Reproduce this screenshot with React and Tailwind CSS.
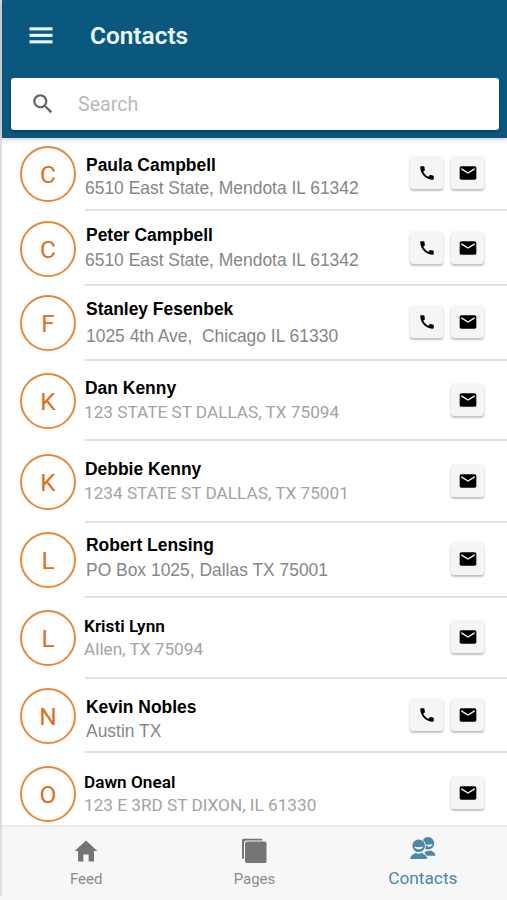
import { useState } from 'react'
import { MdCall, MdMail, MdSearch } from 'react-icons/md'
import { IoMdHome } from 'react-icons/io'

const arial = 'font-["Liberation_Sans",sans-serif]'
const roboto = 'font-[Roboto,sans-serif]'

const contacts = [
  { initial: 'C', name: 'Paula Campbell', address: '6510 East State, Mendota IL 61342', phone: true, row: 'h-[73px]', avatar: 'mt-2', text: 'pt-[17px] pl-[9px] gap-[3px]', addrCls: '-ml-px' },
  { initial: 'C', name: 'Peter Campbell', address: '6510 East State, Mendota IL 61342', phone: true, row: 'h-[75px]', avatar: 'mt-[10px]', text: 'pt-[14px] pl-[9px] gap-[5px]', addrCls: '-ml-px' },
  { initial: 'F', name: 'Stanley Fesenbek', address: '1025 4th Ave,\u00a0 Chicago IL 61330', phone: true, row: 'h-[75px]', avatar: 'mt-[9px]', text: 'pt-[13px] pl-[9px] gap-[7px]', addrCls: 'ml-0' },
  { initial: 'K', name: 'Dan Kenny', address: '123 STATE ST DALLAS, TX 75094', row: 'h-[80px]', avatar: 'mt-3', text: 'pt-[17px] pl-2 gap-1', addrRoboto: true, addrCls: '-ml-px' },
  { initial: 'K', name: 'Debbie Kenny', address: '1234 STATE ST DALLAS, TX 75001', row: 'h-[82px]', avatar: 'mt-[13px]', text: 'pt-[18px] pl-2 gap-1', addrRoboto: true, addrCls: '-ml-px' },
  { initial: 'L', name: 'Robert Lensing', address: 'PO Box 1025, Dallas TX 75001', row: 'h-[75px]', avatar: 'mt-[9px]', text: 'pt-3 pl-[9px] gap-[5px]', addrCls: 'ml-0' },
  { initial: 'L', name: 'Kristi Lynn', address: 'Allen, TX 75094', row: 'h-[81px]', avatar: 'mt-3', text: 'pt-[18px] pl-[7px] gap-[3px]', nameRoboto: true, addrRoboto: true, addrCls: 'ml-0' },
  { initial: 'N', name: 'Kevin Nobles', address: 'Austin TX', phone: true, row: 'h-[74px]', avatar: 'mt-[9px]', text: 'pt-[18px] pl-[9px] gap-1', addrCls: 'ml-0' },
  { initial: 'O', name: 'Dawn Oneal', address: '123 E 3RD ST DIXON, IL 61330', row: 'h-[72px]', avatar: 'mt-[13px]', text: 'pt-[19px] pl-[7px] gap-[3px]', nameRoboto: true, addrRoboto: true, addrCls: 'ml-0' },
]

function MenuIcon() {
  return (
    <svg width="24" height="18" viewBox="0 0 24 18" fill="currentColor">
      <rect x="0.5" y="0.3" width="23" height="3.1" />
      <rect x="0.5" y="6.800" width="23" height="3.1" />
      <rect x="0.5" y="13.300" width="23" height="3.1" />
    </svg>
  )
}

function PagesIcon() {
  return (
    <svg width="26" height="26" viewBox="0 0 26 26" fill="currentColor">
      <path d="M2.500 0.800h17.500a1.500 1.500 0 0 1 1.500 1.500V2.500H5.500A2.500 2.500 0 0 0 3 5v16h-.5A1.500 1.500 0 0 1 1 19.500v-17.200A1.500 1.500 0 0 1 2.500 .8z" />
      <rect x="4" y="3.600" width="21.500" height="21.400" rx="1.800" />
    </svg>
  )
}

// two people, the front one outlined in the bar colour so it cuts into the back one
function PeopleIcon() {
  return (
    <svg width="26" height="24" viewBox="0 0 26 24" fill="currentColor">
      <circle cx="18" cy="7.3" r="6.2" />
      <path d="M14.500 8.300c2.800.8 5.400.6 8-.3-.5 1.600-1.800 2.800-3.600 3z" fill="#f7f7f7" />
      <path d="M14.500 19.800v-3.500c1.500-.3 2-1 2.300-1.800 1.500.9 3 .6 4.200-.3.7 1.500 4.300 1.500 4.400 5.600z" />
      <circle cx="8.700" cy="9.800" r="7.100" fill="#f7f7f7" />
      <path d="M-.8 24c0-5 3.300-5.800 5.500-8.200h8c2.200 2.400 5.500 3.200 5.500 8.200z" fill="#f7f7f7" />
      <circle cx="8.700" cy="9.800" r="6.300" />
      <path d="M4.300 10.600c2.900.9 5.800.8 8.800-.2-.5 1.900-2.100 2.900-4.400 2.900s-4-.9-4.400-2.700z" fill="#f7f7f7" />
      <path d="M.3 23.100c.1-4.400 3.500-4.500 5.200-6.300 2 1.300 4.400 1.300 6.400 0 1.700 1.800 5.100 1.900 5.200 6.300z" />
    </svg>
  )
}

function ActionButton({ label, children }) {
  return (
    <button
      aria-label={label}
      className="flex h-8 w-[33px] items-center justify-center rounded-[3px] bg-[#f5f5f5] text-black shadow-[0_2px_2px_rgba(0,0,0,0.22),0_0_3px_rgba(0,0,0,0.1)]"
    >
      {children}
    </button>
  )
}

function ContactRow({ contact, last }) {
  return (
    <li className={`flex pl-[18px] ${contact.row}`}>
      <div
        className={`flex h-14 w-14 flex-shrink-0 items-center justify-center rounded-full border-2 border-[#e58a3c] pt-[3px] text-[24.5px] leading-none text-[#dd6f1c] ${roboto} ${contact.avatar}`}
      >
        {contact.initial}
      </div>
      <div className={`ml-[9px] flex min-w-0 flex-1 ${last ? '' : 'border-b-2 border-[#e2e2e2]'}`}>
        <div className={`-ml-2 flex min-w-0 flex-1 flex-col whitespace-nowrap ${contact.text}`}>
          <p className={`leading-5 text-black ${contact.nameRoboto ? `${roboto} text-[17.2px] font-semibold` : `${arial} text-[17.45px] font-bold`}`}>
            {contact.name}
          </p>
          <p className={`leading-5 ${contact.addrCls} ${contact.addrRoboto ? `${roboto} text-[17.2px] text-[#a3a3a3]` : `${arial} text-[17.45px] text-[#868686]`}`}>
            {contact.address}
          </p>
        </div>
        <div className={`flex h-8 pr-[23px] ${contact.avatar}`}>
          <div className="flex translate-y-[11px] gap-2">
            {contact.phone && (
              <ActionButton label="Call">
                <MdCall size={18} />
              </ActionButton>
            )}
            <ActionButton label="Email">
              <MdMail size={20} />
            </ActionButton>
          </div>
        </div>
      </div>
    </li>
  )
}

export default function App() {
  const [tab, setTab] = useState('contacts')
  const tabColor = (id) => (tab === id ? 'text-[#4a87a9]' : 'text-[#757575]')

  return (
    <div className={`h-[900px] w-[507px] overflow-hidden bg-[#f7f7f7] ${roboto}`}>
      <div className="flex h-[896px] flex-col border-l-2 border-[#dedee2] bg-white">
        <header className="relative h-[138px] flex-shrink-0 bg-[#0b587e] px-[9px] shadow-[0_1px_5px_rgba(0,0,0,0.25)]">
          <div className="flex h-[78px] items-center pb-[7px] pl-[18px] text-[#e9f6fb]">
            <MenuIcon />
            <h1 className="ml-[37px] text-[24.4px] font-semibold leading-7">Contacts</h1>
          </div>
          <label className="mr-[-1px] flex h-[52px] items-center rounded-[3px] bg-white pl-[19px] shadow-[0_2px_3px_rgba(0,0,0,0.3)]">
            <MdSearch size={26} className="text-[#616161]" />
            <input
              placeholder="Search"
              className="ml-[22px] flex-1 pt-px text-[19.6px] leading-6 outline-none placeholder:text-[#b9b9b9]"
            />
          </label>
        </header>

        <ul className="flex-1">
          {contacts.map((c, i) => (
            <ContactRow key={c.name} contact={c} last={i === contacts.length - 1} />
          ))}
        </ul>

        <nav className="flex h-[71px] flex-shrink-0 border-t-2 border-[#ececec] bg-[#f7f7f7]">
          <button onClick={() => setTab('feed')} className={`flex flex-1 flex-col items-center pt-[10px] ${tabColor('feed')}`}>
            <IoMdHome size={28} />
            <span className="mt-1 text-[15px] leading-5 text-[#8c8c8c]">Feed</span>
          </button>
          <button onClick={() => setTab('pages')} className={`flex flex-1 flex-col items-center pt-[11px] ${tabColor('pages')}`}>
            <PagesIcon />
            <span className="mt-[5px] text-[15px] leading-5 text-[#8c8c8c]">Pages</span>
          </button>
          <button onClick={() => setTab('contacts')} className={`flex flex-1 flex-col items-center pt-[9px] ${tabColor('contacts')}`}>
            <PeopleIcon />
            <span className="mt-2 text-[17.3px] leading-5">Contacts</span>
          </button>
        </nav>
      </div>
    </div>
  )
}
